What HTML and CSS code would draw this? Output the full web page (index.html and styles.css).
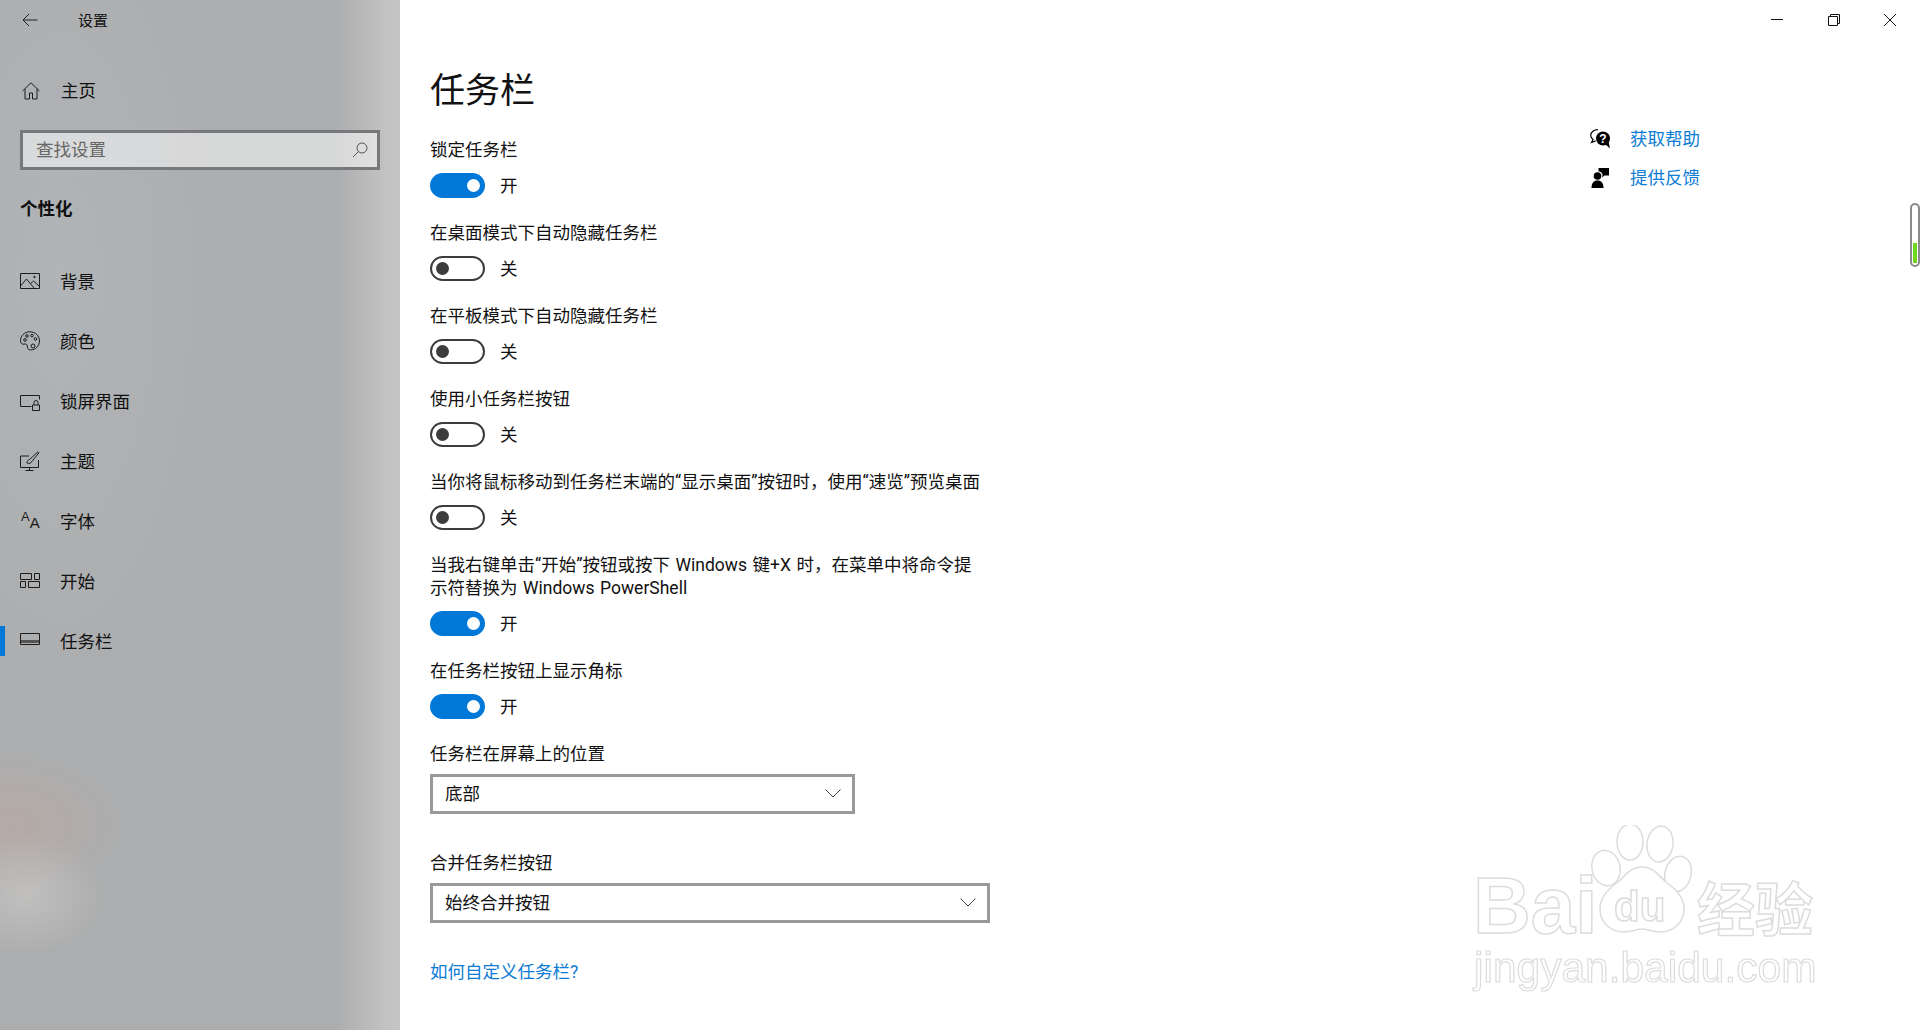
FILE: index.html
```html
<!DOCTYPE html>
<html lang="zh-CN">
<head>
  <meta charset="UTF-8" />
  <title>设置</title>
  <link rel="stylesheet" href="styles.css">
</head>
<body>

  <!-- Menú lateral -->
  <aside class="sidebar">
    <div class="side-head">
      <svg class="back-icon" viewBox="0 0 16 14"><path d="M15.5 7H1M7 1 1 7l6 6"/></svg>
      <span>设置</span>
    </div>
    <a class="home-link" href="#">
      <svg class="nav-icon" viewBox="0 0 20 20"><path d="M1.5 10 10 1.800 18.500 10M4 8v10h4.500v-6h3v6H16V8"/></svg>
      <span>主页</span>
    </a>
    <div class="search-box">
      <span>查找设置</span>
      <svg class="search-icon" viewBox="0 0 16 16"><circle cx="10" cy="6" r="5"/><path d="M6.500 9.500 1 15"/></svg>
    </div>
    <h2 class="side-title">个性化</h2>
    <nav class="side-nav">
      <a href="#">
        <svg class="nav-icon" viewBox="0 0 20 20"><path d="M.5 2.500h19v15H.5zM.5 15l6-7 8 9.500M10.500 12.500l3-2.500 6 5.500"/><circle cx="14.500" cy="6" r=".8"/></svg>
        <span>背景</span>
      </a>
      <a href="#">
        <svg class="nav-icon" viewBox="0 0 20 20"><path d="M10 .8C4.500.8.500 4.800.500 9.800c0 3 2 3.700 3.500 3.300 1.800-.5 3.300.3 3.300 2 0 1.600.5 3.900 3.200 3.900 5 0 9-4 9-9S15.500.8 10 .8z"/><circle cx="5" cy="9" r="1.300"/><circle cx="7" cy="5" r="1.300"/><circle cx="12" cy="4.500" r="1.300"/><circle cx="15.500" cy="8" r="1.300"/><circle cx="13" cy="15" r="2"/></svg>
        <span>颜色</span>
      </a>
      <a href="#">
        <svg class="nav-icon" viewBox="0 0 20 20"><path d="M11.500 15.500H.5v-11h19v4M12.500 14h7v5.500h-7zM14 14v-2.500a2 2 0 0 1 4 0V14"/></svg>
        <span>锁屏界面</span>
      </a>
      <a href="#">
        <svg class="nav-icon" viewBox="0 0 20 20"><path d="M9 5H.5v11.500h18V9M9.500 16.500v3M5.500 19.500h8M7 12c0-2 1-3 2.500-3.500L18 .8l1 1-7 8.500c-.5 1.800-2.500 2.700-5 1.700z"/></svg>
        <span>主题</span>
      </a>
      <a href="#">
        <span class="font-icon"><span class="font-a">A</span><span class="font-b">A</span></span>
        <span>字体</span>
      </a>
      <a href="#">
        <svg class="nav-icon" viewBox="0 0 20 20"><path d="M.5 2.500h11v6H.5zM14.500 2.500h5v6h-5zM.5 10.500h5v6h-5zM8.500 10.500h11v6h-11z"/></svg>
        <span>开始</span>
      </a>
      <a href="#" class="active">
        <svg class="nav-icon" viewBox="0 0 20 20"><path d="M.5 2.500h19v11H.5z"/><path class="bar" d="M1 10.500h18"/></svg>
        <span>任务栏</span>
      </a>
    </nav>
  </aside>

  <main class="main-content">
    <div class="caption">
      <button class="cap-btn"><svg viewBox="0 0 12 12"><path d="M0 5.500h12"/></svg></button>
      <button class="cap-btn"><svg viewBox="0 0 12 12"><path d="M.5 2.500h9v9h-9zM2.500 2.500v-2h9v9h-2"/></svg></button>
      <button class="cap-btn"><svg viewBox="0 0 12 12"><path d="M0 0l12 12M12 0 0 12"/></svg></button>
    </div>

    <div class="page">
      <section class="settings">
        <h1>任务栏</h1>

        <div class="setting">
          <div class="label">锁定任务栏</div>
          <div class="toggle-row"><span class="toggle on"></span><span>开</span></div>
        </div>
        <div class="setting">
          <div class="label">在桌面模式下自动隐藏任务栏</div>
          <div class="toggle-row"><span class="toggle"></span><span>关</span></div>
        </div>
        <div class="setting">
          <div class="label">在平板模式下自动隐藏任务栏</div>
          <div class="toggle-row"><span class="toggle"></span><span>关</span></div>
        </div>
        <div class="setting">
          <div class="label">使用小任务栏按钮</div>
          <div class="toggle-row"><span class="toggle"></span><span>关</span></div>
        </div>
        <div class="setting">
          <div class="label">当你将鼠标移动到任务栏末端的“显示桌面”按钮时，使用“速览”预览桌面</div>
          <div class="toggle-row"><span class="toggle"></span><span>关</span></div>
        </div>
        <div class="setting">
          <div class="label">当我右键单击“开始”按钮或按下 Windows 键+X 时，在菜单中将命令提<br>示符替换为 Windows PowerShell</div>
          <div class="toggle-row"><span class="toggle on"></span><span>开</span></div>
        </div>
        <div class="setting">
          <div class="label">在任务栏按钮上显示角标</div>
          <div class="toggle-row"><span class="toggle on"></span><span>开</span></div>
        </div>

        <div class="field">
          <div class="label">任务栏在屏幕上的位置</div>
          <div class="select select-short">
            <span>底部</span>
            <svg class="chevron" viewBox="0 0 16 9"><path d="M.5.5 8 8 15.500.5"/></svg>
          </div>
        </div>
        <div class="field">
          <div class="label">合并任务栏按钮</div>
          <div class="select">
            <span>始终合并按钮</span>
            <svg class="chevron" viewBox="0 0 16 9"><path d="M.5.5 8 8 15.500.5"/></svg>
          </div>
        </div>

        <a class="link" href="#">如何自定义任务栏?</a>
      </section>

      <aside class="help">
        <a href="#">
          <svg class="help-icon" viewBox="0 0 20 20">
            <path class="thin" d="M8 .6C4 .6.700 3 .700 6.300c0 1.700.9 3.200 2.300 4.200L1.600 13.500l4-1.600"/>
            <circle cx="13" cy="9.500" r="7"/>
            <path d="M15 15l5 4.500-1.500-7z"/>
            <text x="13" y="13.500" class="help-q">?</text>
          </svg>
          <span>获取帮助</span>
        </a>
        <a href="#">
          <svg class="help-icon" viewBox="0 0 20 20">
            <circle cx="7.500" cy="8" r="3.800"/>
            <path d="M1.500 20c0-5 2.200-7.500 6-7.500s6 2.500 6 7.500z"/>
            <path d="M8.500 0H19v7.500h-4.500L12 9.500l.5-2.500c0-2-1.500-3.500-4-3.800z"/>
          </svg>
          <span>提供反馈</span>
        </a>
      </aside>
    </div>

    <div class="scroll-thumb"><span></span></div>
  </main>

  <!-- Marca de agua -->
  <svg class="watermark" viewBox="0 0 370 170" width="370" height="170">
    <ellipse cx="136" cy="43" rx="14" ry="18" transform="rotate(-12 136 43)"/>
    <ellipse cx="160" cy="17" rx="13" ry="18"/>
    <ellipse cx="190" cy="19" rx="13" ry="18" transform="rotate(8 190 19)"/>
    <ellipse cx="208" cy="49" rx="13" ry="18" transform="rotate(14 208 49)"/>
    <path d="M172 42c-12 0-17 9-24 15-8 6-18 14-18 27 0 14 11 23 24 23 8 0 13-3 18-3s10 3 18 3c13 0 24-9 24-23 0-13-10-21-18-27-7-6-12-15-24-15z"/>
    <text class="wm-big" x="3" y="108">Bai</text>
    <text class="wm-du" x="144" y="96">du</text>
    <text class="wm-cjk" x="227" y="106">经验</text>
    <text class="wm-url" x="4" y="157">jingyan.baidu.com</text>
  </svg>

</body>
</html>
```

FILE: styles.css
```css
* { box-sizing: border-box; margin: 0; padding: 0; }
html, body { height: 100%; }
body {
  display: flex;
  font-family: Roboto, "Noto Sans CJK SC", sans-serif;
  font-size: 17.5px;
  line-height: 24px;
  color: #111;
  background: #fff;
  overflow: hidden;
}
a { color: inherit; text-decoration: none; }

/* --- SIDEBAR --- */
.sidebar {
  width: 400px;
  flex: none;
  display: flex;
  flex-direction: column;
  background:
    linear-gradient(90deg, transparent 84%, rgba(203,203,203,.75) 97%),
    radial-gradient(ellipse 80px 60px at 25px 895px, rgba(202,200,198,.7), transparent),
    radial-gradient(ellipse 110px 70px at 10px 825px, rgba(186,168,160,.65), transparent),
    radial-gradient(ellipse 160px 420px at 60px 280px, rgba(178,182,186,.8), transparent),
    #acadae;
}
.side-head {
  height: 40px;
  display: flex;
  align-items: center;
  padding-left: 22px;
  font-size: 15px;
}
.side-head span { margin-top: 2px; }
.back-icon {
  width: 16px; height: 14px;
  margin-right: 40px;
  fill: none;
  stroke: #222;
  stroke-width: 1;
}
.home-link {
  display: flex;
  align-items: center;
  height: 40px;
  margin-top: 31px;
  padding-left: 21px;
}
.home-link span { margin-left: 20px; }
.nav-icon {
  width: 20px; height: 20px;
  flex: none;
  fill: none;
  stroke: #1c1c1c;
  stroke-width: 1;
}
.nav-icon .bar { stroke: #555; stroke-width: 3; }
.search-box {
  display: flex;
  align-items: center;
  justify-content: space-between;
  height: 40px;
  margin: 19px 20px 0;
  padding: 0 9px 0 13px;
  border: 3px solid #76787b;
  background: rgba(255,255,255,.52);
  color: #666;
}
.search-icon {
  width: 16px; height: 16px;
  fill: none;
  stroke: #555;
  stroke-width: 1;
}
.side-title {
  margin: 27px 0 0 20px;
  font-size: 17.5px;
  line-height: 24px;
  font-weight: 700;
}
.side-nav {
  display: flex;
  flex-direction: column;
  margin-top: 30px;
}
.side-nav a {
  display: flex;
  align-items: center;
  height: 60px;
  padding-left: 20px;
  position: relative;
}
.side-nav a > span:last-child { margin-left: 20px; padding-top: 1px; }
.side-nav a.active::before {
  content: "";
  position: absolute;
  left: 0; top: 15px;
  width: 5px; height: 30px;
  background: #0078d7;
}
.font-icon {
  width: 20px;
  height: 20px;
  flex: none;
  display: flex;
  font-family: "Liberation Sans", sans-serif;
  padding-left: 1px;
  color: #1c1c1c;
}
.font-a { font-size: 13px; line-height: 14px; margin-top: -1px; }
.font-b { font-size: 15px; line-height: 15px; margin-top: 4px; }

/* --- MAIN --- */
.main-content {
  flex: 1;
  min-width: 0;
  position: relative;
}
.caption {
  display: flex;
  justify-content: flex-end;
  height: 40px;
  padding-right: 1.500px;
}
.cap-btn {
  width: 56.500px;
  border: none;
  background: none;
  display: flex;
  align-items: center;
  justify-content: center;
}
.cap-btn svg {
  width: 12px; height: 12px;
  fill: none;
  stroke: #111;
  stroke-width: 1;
}
.page {
  display: flex;
  padding-left: 30px;
}
.settings {
  width: 560px;
  flex: none;
}
.settings h1 {
  font-size: 35px;
  line-height: 48px;
  font-weight: 400;
  margin-top: 28px;
  margin-bottom: 22px;
}
.label {
  line-height: 23px;
  padding-top: 1px;
  word-spacing: 1.200px;
}
.setting { margin-bottom: 23px; }
.toggle-row {
  display: flex;
  align-items: center;
  gap: 15px;
  height: 25px;
  margin-top: 11px;
}
.toggle {
  width: 55px; height: 25px;
  border: 2.500px solid #3c3c3c;
  border-radius: 13px;
  position: relative;
}
.toggle::after {
  content: "";
  position: absolute;
  left: 3.500px; top: 3.500px;
  width: 13px; height: 13px;
  border-radius: 50%;
  background: #3c3c3c;
}
.toggle.on { background: #0078d7; border-color: #0078d7; }
.toggle.on::after { left: auto; right: 3.500px; background: #fff; }
.field { margin-bottom: 37.500px; }
.select {
  display: flex;
  align-items: center;
  justify-content: space-between;
  height: 40px;
  margin-top: 7.500px;
  padding: 0 11px 0 12px;
  border: 3px solid #999;
}
.select-short { width: 425px; }
.chevron {
  width: 16px; height: 9px;
  fill: none;
  stroke: #444;
  stroke-width: 1;
}
.link, .help a span { color: #0c7cd5; }
.link { display: block; }

.help {
  margin: 87px 0 0 600px;
  display: flex;
  flex-direction: column;
  gap: 15px;
}
.help a {
  display: flex;
  align-items: center;
  gap: 20px;
}
.help-icon { width: 20px; height: 20px; fill: #000; }
.help-icon .thin { fill: #fff; stroke: #000; stroke-width: 1.200; }
.help-q {
  fill: #fff;
  font: 700 12px "Liberation Sans", sans-serif;
  text-anchor: middle;
}

.scroll-thumb {
  position: absolute;
  right: 0; top: 203px;
  width: 10px; height: 64px;
  border: 2px solid #8a8a8a;
  border-radius: 5px;
}
.scroll-thumb span {
  position: absolute;
  left: 1px; bottom: 2px;
  width: 4px; height: 20px;
  background: #6fd81c;
}

/* --- WATERMARK --- */
.watermark {
  position: absolute;
  left: 1470px; top: 825px;
  fill: #fff;
  stroke: #dcdcdc;
  stroke-width: 1.500;
  filter: blur(.4px);
}
.wm-big { font: 700 80px "Liberation Sans", sans-serif; }
.wm-du { font: 700 42px "Liberation Sans", sans-serif; }
.wm-cjk { font: 700 58px "Noto Sans CJK SC", sans-serif; }
.wm-url { font: 400 42.500px "Liberation Sans", sans-serif; stroke-width: 1.200; }
```
